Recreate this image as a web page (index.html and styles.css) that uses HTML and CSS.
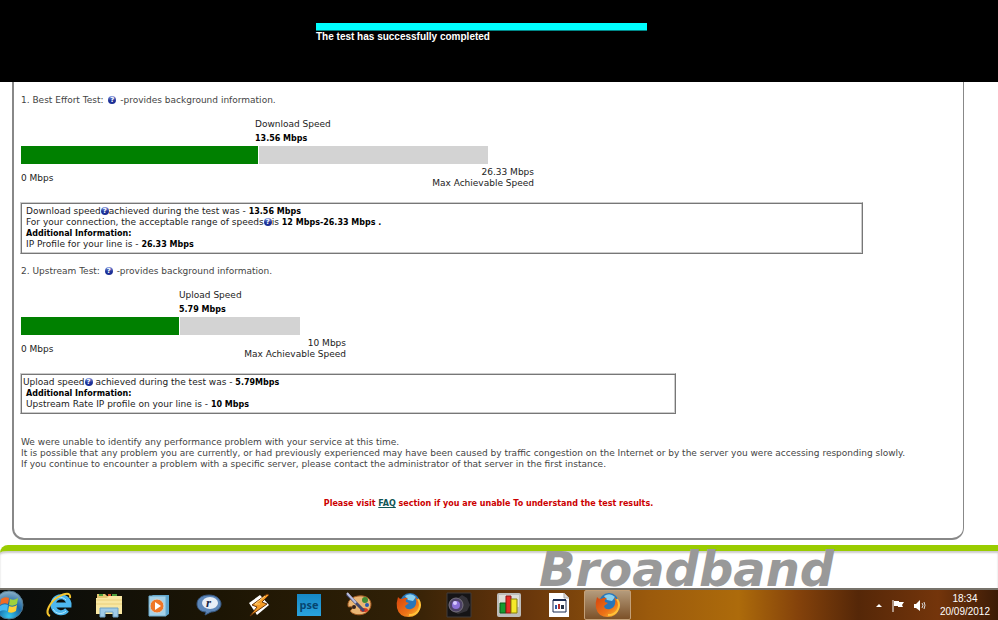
FILE: index.html
```html
<!DOCTYPE html>
<html lang="en">
<head>
    <meta charset="UTF-8">
    <meta name="viewport" content="width=device-width, initial-scale=1.0">
    <title>Broadband Speed Test</title>
    <link rel="stylesheet" href="styles.css">
</head>
<body>

    <header class="applet">
        <div class="status">
            <div class="progress"></div>
            <p>The test has successfully completed</p>
        </div>
    </header>

    <main class="panel">
        <!-- Download -->
        <section class="test">
            <h2>1. Best Effort Test: <a class="help" href="#">?</a> -provides background information.</h2>
            <div class="gauge download">
                <div class="reading">Download Speed<br><b>13.56 Mbps</b></div>
                <div class="bar"><div class="fill" style="width: 51%"></div></div>
                <div class="scale">
                    <span>0 Mbps</span>
                    <span class="max">26.33 Mbps<br>Max Achievable Speed</span>
                </div>
            </div>
            <div class="result wide">
                <p>Download speed<a class="help" href="#">?</a>achieved during the test was - <b>13.56 Mbps</b></p>
                <p>For your connection, the acceptable range of speeds<a class="help" href="#">?</a>is <b>12 Mbps-26.33 Mbps .</b></p>
                <p><b>Additional Information:</b></p>
                <p>IP Profile for your line is - <b>26.33 Mbps</b></p>
            </div>
        </section>

        <!-- Upload -->
        <section class="test">
            <h2>2. Upstream Test: <a class="help" href="#">?</a> -provides background information.</h2>
            <div class="gauge upload">
                <div class="reading">Upload Speed<br><b>5.79 Mbps</b></div>
                <div class="bar"><div class="fill" style="width: 57%"></div></div>
                <div class="scale">
                    <span>0 Mbps</span>
                    <span class="max">10 Mbps<br>Max Achievable Speed</span>
                </div>
            </div>
            <div class="result">
                <p class="outdent">Upload speed<a class="help" href="#">?</a> achieved during the test was - <b>5.79Mbps</b></p>
                <p><b>Additional Information:</b></p>
                <p>Upstream Rate IP profile on your line is - <b>10 Mbps</b></p>
            </div>
        </section>

        <div class="summary">
            <p>We were unable to identify any performance problem with your service at this time.</p>
            <p>It is possible that any problem you are currently, or had previously experienced may have been caused by traffic congestion on the Internet or by the server you were accessing responding slowly.</p>
            <p>If you continue to encounter a problem with a specific server, please contact the administrator of that server in the first instance.</p>
        </div>
        <p class="faq">Please visit <a href="#">FAQ</a> section if you are unable To understand the test results.</p>
    </main>

    <footer class="brand"><span>Broadband</span></footer>

    <nav class="taskbar">
        <button class="start" aria-label="Start">
            <svg width="30" height="30" viewBox="0 0 30 30">
                <defs>
                    <radialGradient id="orb" cx="50%" cy="90%" r="90%"><stop offset="0" stop-color="#35c8ef"/><stop offset=".5" stop-color="#1766a4"/><stop offset="1" stop-color="#8fb3c8"/></radialGradient>
                </defs>
                <circle cx="15" cy="15" r="14" fill="url(#orb)" stroke="#51798f"/>
                <path d="M7 9q4-3 8-1l-1 6q-4-2-8 1z" fill="#f06a24"/>
                <path d="M16 9q4 2 8-1l-1 6q-4 3-8 1z" fill="#9ed23b"/>
                <path d="M6 16q4-3 8-1l-1 6q-4-2-8 1z" fill="#46b8f2"/>
                <path d="M15 16q4 2 8-1l-1 6q-4 3-8 1z" fill="#ffd035"/>
            </svg>
        </button>
        <button aria-label="Internet Explorer">
            <svg width="26" height="26" viewBox="0 0 26 26">
                <path d="M21 18a8 8 0 1 1 2-5H8" fill="none" stroke="#4db7ee" stroke-width="5"/>
                <path d="M20 19a8 8 0 0 1-13-2M6 9a9 9 0 0 1 14-1" fill="none" stroke="#b4e9ff" stroke-width="1"/>
                <path d="M4 24C-2 21 4 10 12 5c7-4 13-5 12 1" fill="none" stroke="#f5c52e" stroke-width="2"/>
            </svg>
        </button>
        <button aria-label="Windows Explorer">
            <svg width="28" height="26" viewBox="0 0 28 26">
                <path d="M2 4V2h8l2 2h12v4H2z" fill="#e5c672"/>
                <path d="M4 3h4M17 3h5" stroke="#4c9e3d" stroke-width="2"/>
                <path d="M13 3h3" stroke="#d9532c" stroke-width="2"/>
                <path d="M1 6h11l2-2h13v18H1z" fill="#f8e7a3"/>
                <path d="M1 8h26M1 12h26" stroke="#e9cf7b"/>
                <path d="M5 25v-9h18v9h-5v-5h-8v5z" fill="#9fcbe8" stroke="#6fa2c6"/>
            </svg>
        </button>
        <button aria-label="Windows Media Player">
            <svg width="22" height="24" viewBox="0 0 22 24">
                <path d="M4 2h17v19l-3 2z" fill="#5aa5cf"/>
                <path d="M1 3h17v20H1z" fill="#a4d2e9" stroke="#6daacb"/>
                <circle cx="9" cy="13" r="7" fill="#ef7626" stroke="#c9d8dd"/>
                <path d="M7 9l6 4-6 4z" fill="#fff"/>
            </svg>
        </button>
        <button aria-label="RealPlayer">
            <svg width="26" height="24" viewBox="0 0 26 24">
                <path d="M13 2C5 2 1 6 1 11s4 8 9 8l-1 3 6-3c6 0 10-4 10-8s-4-9-12-9z" fill="#5d87b9" stroke="#37577f"/>
                <ellipse cx="14" cy="10" rx="8" ry="6" fill="#e8eff7"/>
                <text x="10" y="14" class="real">r</text>
            </svg>
        </button>
        <button aria-label="Winamp">
            <svg width="24" height="26" viewBox="0 0 24 26">
                <path d="M2 11L13 3l9 10-12 10z" fill="#fff"/>
                <path d="M20 2L5 13l5 2-7 9 17-12-5-2 7-7z" fill="#f49b25" stroke="#68340a"/>
                <path d="M18 4L8 12h5" fill="none" stroke="#ffd27e"/>
            </svg>
        </button>
        <button aria-label="Photoshop Elements"><span class="pse">pse</span></button>
        <button aria-label="Paint">
            <svg width="28" height="26" viewBox="0 0 28 26">
                <path d="M3 14C2 7 10 3 18 4c8 1 10 9 6 14-4 6-14 6-18 2-2-2 3-3 1-5-1-1-4 1-4-1z" fill="#eab675" stroke="#a35b22"/>
                <circle cx="20" cy="8" r="3" fill="#418b35"/>
                <circle cx="22" cy="13" r="2" fill="#2759ae"/>
                <ellipse cx="19" cy="18" rx="4" ry="2" fill="#d63b23"/>
                <circle cx="9" cy="15" r="2" fill="#33201a"/>
                <path d="M2 2l17 17" stroke="#42486d" stroke-width="3"/>
                <path d="M2 1l9 10" stroke="#b9bddd" stroke-width="2"/>
            </svg>
        </button>
        <button aria-label="Firefox">
            <svg width="26" height="26" viewBox="0 0 26 26">
                <defs>
                    <linearGradient id="fox" x1="0" y1="0" x2="1" y2="1"><stop offset="0" stop-color="#d5430d"/><stop offset=".6" stop-color="#ee7417"/><stop offset="1" stop-color="#ffc938"/></linearGradient>
                </defs>
                <g id="firefox">
                    <circle cx="14" cy="11" r="10" fill="#2876b9"/>
                    <path d="M9 4q6-4 11 1l-3 4-5-1z" fill="#8bd2ef"/>
                    <path d="M2 5q1 2 4 2 3-2 6-1-3 2-2 4l3 1-4 3q1 4 6 3 4-1 5-5 1-3-1-7 7 5 5 12-3 8-11 8Q3 25 1 16q-1-5 1-11z" fill="url(#fox)"/>
                    <path d="M22 7q4 6 0 12-3 4-9 4" fill="none" stroke="#ffc33a" stroke-width="2"/>
                </g>
            </svg>
        </button>
        <button aria-label="Camera">
            <svg width="26" height="26" viewBox="0 0 26 26">
                <path d="M1 1h24v24H1z" fill="#151416" stroke="#403b38"/>
                <path d="M5 8l7-2 4-3 5 3 3 7-3 6-9 3-8-5z" fill="#343238"/>
                <circle cx="10" cy="13" r="7" fill="#4e4368" stroke="#77727d"/>
                <circle cx="10" cy="13" r="4" fill="#8c71d8"/>
                <circle cx="9" cy="11" r="2" fill="#d7c9ff"/>
            </svg>
        </button>
        <button aria-label="Chart">
            <svg width="24" height="24" viewBox="0 0 24 24">
                <rect width="24" height="24" rx="2" fill="#bdbdbb"/>
                <path d="M2 2h20v12H2z" fill="#deded9"/>
                <path d="M3 10h6v10H3z" fill="#169a2f" stroke="#085c18"/>
                <path d="M9 3h5v17H9z" fill="#e62b25" stroke="#8d1313"/>
                <path d="M14 6h6v14h-6z" fill="#f5e928" stroke="#898109"/>
            </svg>
        </button>
        <button aria-label="Document">
            <svg width="20" height="24" viewBox="0 0 20 24">
                <path d="M0 0h15l5 5v19H0z" fill="#fff"/>
                <path d="M15 0v5h5" fill="#ddd" stroke="#aaa"/>
                <path d="M4 7h13v12H4z" fill="#fff" stroke="#1c2d51"/>
                <path d="M4 7h13" stroke="#1c2d51" stroke-width="2"/>
                <path d="M6 12h2v4H6z" fill="#2c59a4"/><path d="M9 11h2v5H9z" fill="#b8302c"/><path d="M12 12h3v4h-3z" fill="#263447"/>
            </svg>
        </button>
        <button class="active" aria-label="Firefox window">
            <svg width="26" height="26" viewBox="0 0 26 26"><use href="#firefox"/></svg>
        </button>
        <div class="tray">
            <svg width="6" height="4" viewBox="0 0 6 4"><path d="M0 4l3-3 3 3z" fill="#fff"/></svg>
            <svg width="14" height="13" viewBox="0 0 14 13"><path d="M2 1v12" stroke="#fff" stroke-width="1"/><path d="M3 2h5v1h5l-2 3 1 2H7V7H3z" fill="#fff"/></svg>
            <svg width="12" height="13" viewBox="0 0 12 13"><path d="M0 5h2l4-4v11L2 9H0z" fill="#fff"/><path d="M8 4q2 2 0 5M10 3q2 3 0 7" fill="none" stroke="#ddd"/></svg>
            <time datetime="2012-09-20T18:34">18:34<br>20/09/2012</time>
        </div>
    </nav>

</body>
</html>
```
FILE: styles.css
```css
* {
    box-sizing: border-box;
}
body {
    margin: 0;
    min-height: 100vh;
    display: flex;
    flex-direction: column;
    overflow-x: hidden;
    background-color: #fff;
    color: #222;
    font-family: "DejaVu Sans", Verdana, sans-serif;
    font-size: 9px;
    line-height: 11px;
}
p, h2 {
    margin: 0;
}
b, .faq {
    font-size: 8px;
    font-weight: bold;
}
b {
    color: #000;
}

/* black strip left by the test applet */
.applet {
    display: flex;
    justify-content: center;
    height: 82px;
    padding-top: 23px;
    padding-right: 35px;
    background-color: #000;
}
.status {
    width: 331px;
    color: #fff;
    font: bold 10px/11px "Liberation Sans", Arial, sans-serif;
}
.progress {
    height: 8px;
    background-color: #0ff;
    border-bottom: 1px solid #088;
}

/* results */
.panel {
    margin: 0 34px 5px 12px;
    padding: 13px 7px 29px;
    border: 1px solid #888;
    border-width: 0 1px 2px 2px;
    border-radius: 0 0 12px 12px;
}
.test {
    margin-bottom: 12px;
}
.test h2 {
    color: #444;
    font-size: 9px;
    font-weight: normal;
}
.help {
    display: inline-block;
    width: 8px;
    height: 8px;
    border-radius: 4px;
    background: linear-gradient(#8296dc, #1c2f96 60%);
    color: #fff;
    font-size: 7px;
    font-weight: bold;
    line-height: 8px;
    text-align: center;
    text-decoration: none;
    vertical-align: 1px;
}
h2 .help {
    margin: 0 1px 0 2px;
}
.gauge {
    padding-top: 11px;
    margin-bottom: 13px;
}
.download {
    width: 513px;
}
.upload {
    width: 325px;
}
.reading {
    padding-left: 234px;
    line-height: 14px;
}
.upload .reading {
    padding-left: 158px;
}
.bar {
    height: 18px;
    margin-right: 46px;
    background-color: #d3d3d3;
}
.fill {
    height: 18px;
    background-color: #008000;
    border-right: 1px solid #fff;
}
.scale {
    display: flex;
    justify-content: space-between;
    align-items: center;
    padding-top: 3px;
}
.max {
    text-align: right;
}
.result {
    width: 656px;
    max-width: 100%;
    margin-left: -1px;
    padding: 3px 5px;
    border: 1px solid #ccc;
    border-right-color: #777;
    border-bottom-color: #777;
    box-shadow: inset 1px 1px #777, inset -1px -1px #ccc;
}
.wide {
    width: 843px;
}
.outdent {
    margin-left: -3px;
}
.summary {
    padding-top: 11px;
    color: #444;
}
.faq {
    padding-top: 28px;
    color: #c00;
    text-align: center;
}
.faq a {
    color: #155;
}

.brand {
    flex: 1;
    padding-left: 54%;
    border-top: 6px solid #9c0;
    border-top-left-radius: 8px;
    box-shadow: inset 0 2px 2px #ccc;
    color: #999;
    font-size: 48px;
    font-style: italic;
    font-weight: bold;
    line-height: 36px;
    white-space: nowrap;
}

/* taskbar */
.taskbar {
    display: flex;
    height: 32px;
    overflow: hidden;
    border-top: 2px solid #77736b;
    background: linear-gradient(90deg, #070b0b 0%, #1c1504 22%, #302006 40%, #65340b 52%, #9b5a0c 65%, #ad6b0b 74%, #84420b 80%, #552708 86%, #74350b 94%, #3b1b07 100%);
}
.taskbar button {
    flex: none;
    display: flex;
    justify-content: center;
    align-items: center;
    width: 50px;
    padding: 0;
    border: 0;
    background: none;
}
.taskbar .start {
    justify-content: flex-end;
    width: 34px;
    padding-right: 10px;
}
.taskbar .start svg {
    flex: none;
}
.taskbar .active {
    width: 47px;
    border: 1px solid #c3a078;
    border-radius: 2px;
    background: linear-gradient(#b49b7c, #7c5128);
}
.real {
    fill: #182848;
    font: italic bold 13px "Liberation Serif", serif;
}
.pse {
    width: 24px;
    height: 22px;
    background: linear-gradient(#1687c4, #2aa4df);
    color: #064570;
    font: bold 11px/22px "Open Sans", sans-serif;
}
.tray {
    display: flex;
    align-items: center;
    gap: 9px;
    margin-left: auto;
    padding-right: 8px;
    color: #fff;
}
.tray time {
    padding-left: 5px;
    font: 10px/13px "Liberation Sans", Arial, sans-serif;
    text-align: center;
}
```
